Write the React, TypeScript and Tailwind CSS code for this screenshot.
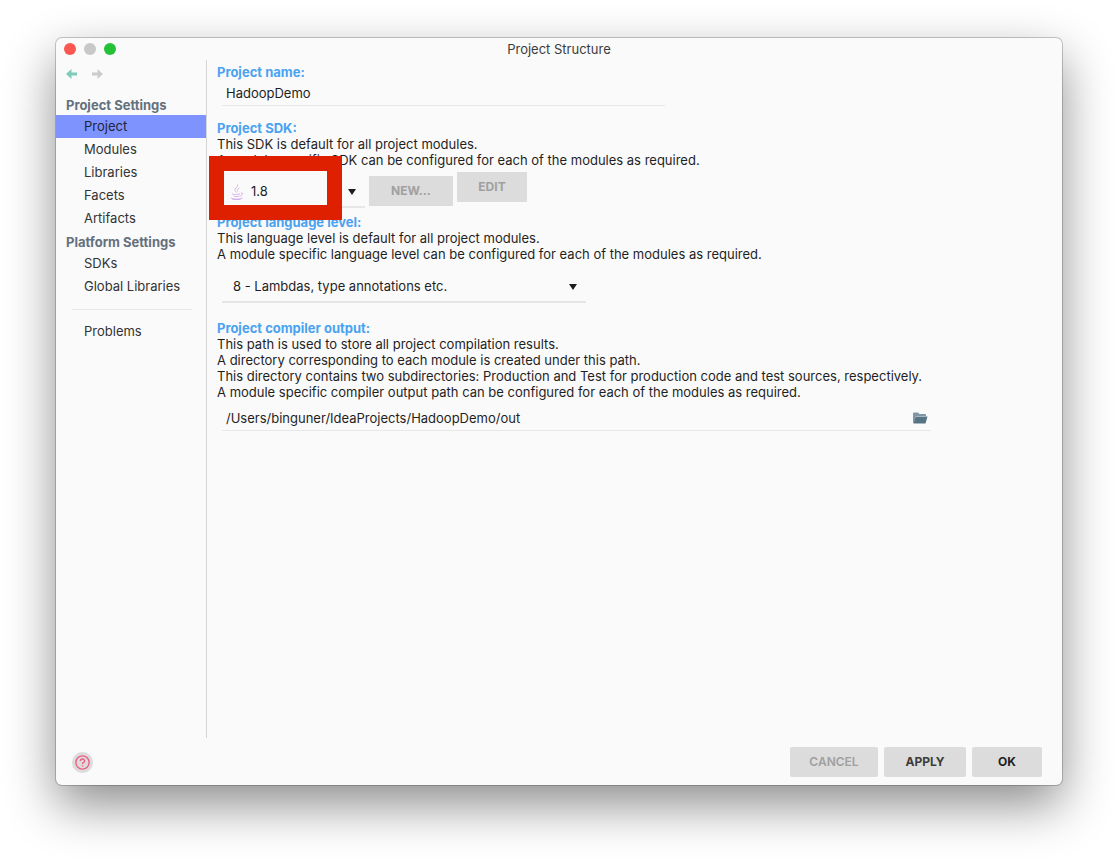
import { useState } from "react";
import type { ReactNode } from "react";

const PROJECT_ITEMS = ["Project", "Modules", "Libraries", "Facets", "Artifacts"];
const PLATFORM_ITEMS = ["SDKs", "Global Libraries"];

const BackArrow = () => (
  <svg width="12" height="10" viewBox="0 0 12 10" fill="currentColor">
    <path d="M0 5 5.5 0v3.4H11v3.2H5.500V10z" />
  </svg>
);

const ForwardArrow = () => (
  <svg width="12" height="10" viewBox="0 0 12 10" fill="currentColor">
    <path d="M11 5 5.500 0v3.400H0v3.200H5.500V10z" />
  </svg>
);

const JavaIcon = () => (
  <svg width="14" height="16" viewBox="0 0 14 16" fill="none" stroke="#d3aae8" strokeWidth="0.900">
    <path d="M7.500 0.500C8.500 3 4 4.500 5 6.500L6.500 8.500" />
    <path d="M9.500 4C7 5.200 7.200 6 8 7.500" />
    <path d="M2.500 9.500C1 10.500 6 11 10 9.800M11 9c2.500-.5 2 2-.8 3" />
    <path d="M3.500 12c1.500.8 4 .8 6 0" />
    <path d="M1 14c2 1.500 9 1.500 11.500 0M2.500 15.500h8" />
  </svg>
);

const FolderIcon = () => (
  <svg width="16" height="12" viewBox="0 0 16 12">
    <path d="M1 11V1.500Q1 .5 2 .5h4l1.500 1.500H13q1 0 1 1V4H4L2 11z" fill="#7f97a5" />
    <path d="M3.800 4.500H15.500L13.500 11.500H1.500z" fill="#567486" />
  </svg>
);

const HelpIcon = () => (
  <svg width="15" height="15" viewBox="0 0 14 14" fill="none" stroke="#ee5f84" strokeWidth="1.300">
    <circle cx="7" cy="7" r="6.200" />
    <path d="M5 5.700C5 3 9 3.100 9 5.500 9 6.900 7 6.900 7 8.500M7 9.500v1.300" />
  </svg>
);

const DropArrow = () => (
  <svg
    className="pointer-events-none absolute right-[9px] top-1/2 -translate-y-1/2"
    width="8"
    height="6"
    viewBox="0 0 8 6"
  >
    <path d="M0 0h8L4 6z" fill="#1c1c1c" />
  </svg>
);

const NavItem = ({
  label,
  active,
  onClick,
}: {
  label: string;
  active: boolean;
  onClick: () => void;
}) => (
  <button
    type="button"
    onClick={onClick}
    className={
      active
        ? "block h-[23px] w-full bg-[#7f93ff] pb-px pl-7 text-left text-[#20243a]"
        : "block h-[23px] w-full pb-px pl-7 text-left text-[#333333]"
    }
  >
    {label}
  </button>
);

const GroupTitle = ({ children }: { children: ReactNode }) => (
  <h2 className="h-[22px] pl-[10px] pt-1 font-bold text-[#64707c]">{children}</h2>
);

const FieldTitle = ({ htmlFor, children }: { htmlFor: string; children: ReactNode }) => (
  <label htmlFor={htmlFor} className="block font-bold text-[#4aa3f0]">
    {children}
  </label>
);

const App = () => {
  const [selected, setSelected] = useState("Project");
  const [name, setName] = useState("HadoopDemo");
  const [output, setOutput] = useState("/Users/binguner/IdeaProjects/HadoopDemo/out");

  return (
    <div className="flex min-h-screen bg-white px-14 pb-[74px] pt-[38px] font-['Inter','Liberation_Sans',sans-serif] text-[13px] leading-4 text-[#1f1f1f]">
      <div className="flex flex-1 flex-col rounded-md bg-[#fafafa] shadow-[0_0_0_1px_rgba(0,0,0,0.2),0_20px_50px_rgba(0,0,0,0.45)]">
        <header className="grid h-[22px] grid-cols-[1fr_auto_1fr] items-center">
          <div className="flex gap-2 pl-2">
            <span className="size-3 rounded-full bg-[#fc5650]" />
            <span className="size-3 rounded-full bg-[#c8c8c8]" />
            <span className="size-3 rounded-full bg-[#24c138]" />
          </div>
          <h1 className="text-[#3c3c3c]">Project Structure</h1>
        </header>

        <div className="flex flex-1">
          <nav className="w-[151px] shrink-0 border-r border-[#d6d6d6]">
            <div className="flex h-[33px] gap-[14px] pl-[10px] pt-[9px]">
              <button type="button" aria-label="Back" className="h-[10px] text-[#80cbb8]">
                <BackArrow />
              </button>
              <button type="button" aria-label="Forward" className="h-[10px] text-[#cccccc]">
                <ForwardArrow />
              </button>
            </div>
            <GroupTitle>Project Settings</GroupTitle>
            {PROJECT_ITEMS.map((item) => (
              <NavItem
                key={item}
                label={item}
                active={item === selected}
                onClick={() => setSelected(item)}
              />
            ))}
            <GroupTitle>Platform Settings</GroupTitle>
            {PLATFORM_ITEMS.map((item) => (
              <NavItem
                key={item}
                label={item}
                active={item === selected}
                onClick={() => setSelected(item)}
              />
            ))}
            <hr className="mb-[10px] ml-4 mr-[14px] mt-[11px] border-[#e8e8e8]" />
            <NavItem
              label="Problems"
              active={selected === "Problems"}
              onClick={() => setSelected("Problems")}
            />
          </nav>

          <main className="flex-1 pl-[10px] pt-1">
            <section>
              <FieldTitle htmlFor="name">Project name:</FieldTitle>
              <input
                id="name"
                value={name}
                onChange={(e) => setName(e.target.value)}
                className="ml-[5px] block h-[26px] w-full max-w-[443px] border-b border-[#e8e8e8] bg-transparent pl-1 outline-none"
              />
            </section>

            <section className="mt-[14px]">
              <FieldTitle htmlFor="sdk">Project SDK:</FieldTitle>
              <p>This SDK is default for all project modules.</p>
              <p>A module specific SDK can be configured for each of the modules as required.</p>
              <div className="relative ml-[5px] flex h-[46px] items-start gap-1 pt-1">
                <div className="relative mt-1 w-[143px]">
                  <select
                    id="sdk"
                    className="h-8 w-full appearance-none border-b-2 border-[#e6e6e6] bg-transparent pl-[29px] outline-none"
                  >
                    <option>1.8</option>
                  </select>
                  <span className="pointer-events-none absolute left-2 top-2">
                    <JavaIcon />
                  </span>
                  <DropArrow />
                </div>
                <button
                  type="button"
                  disabled
                  className="mt-1 h-[30px] w-[84px] bg-[#dcdcdc] text-xs font-bold text-[#a0a0a0]"
                >
                  NEW...
                </button>
                <button
                  type="button"
                  disabled
                  className="h-[30px] w-[70px] bg-[#dcdcdc] text-xs font-bold text-[#a0a0a0]"
                >
                  EDIT
                </button>
                {/* highlight around the chosen SDK */}
                <div className="pointer-events-none absolute -left-[13px] -top-3 h-16 w-[133px] border-[15px] border-[#df2000]" />
              </div>
            </section>

            <section>
              <FieldTitle htmlFor="level">Project language level:</FieldTitle>
              <p>This language level is default for all project modules.</p>
              <p>
                A module specific language level can be configured for each of the modules as
                required.
              </p>
              <div className="relative ml-[5px] mt-[9px] max-w-[364px]">
                <select
                  id="level"
                  className="h-8 w-full appearance-none border-b-2 border-[#e6e6e6] bg-transparent pl-[11px] outline-none"
                >
                  <option>8 - Lambdas, type annotations etc.</option>
                </select>
                <DropArrow />
              </div>
            </section>

            <section className="mt-[17px]">
              <FieldTitle htmlFor="output">Project compiler output:</FieldTitle>
              <p>This path is used to store all project compilation results.</p>
              <p>A directory corresponding to each module is created under this path.</p>
              <p>
                This directory contains two subdirectories: Production and Test for production code
                and test sources, respectively.
              </p>
              <p>
                A module specific compiler output path can be configured for each of the modules as
                required.
              </p>
              <div className="ml-[5px] mt-[6px] flex h-[25px] max-w-[709px] items-center border-b border-[#e8e8e8] pr-[3px]">
                <input
                  id="output"
                  value={output}
                  onChange={(e) => setOutput(e.target.value)}
                  className="min-w-0 flex-1 bg-transparent pl-1 outline-none"
                />
                <button type="button" aria-label="Browse">
                  <FolderIcon />
                </button>
              </div>
            </section>
          </main>
        </div>

        <footer className="flex items-center gap-[6px] pb-2 pl-4 pr-5 pt-[9px]">
          <button
            type="button"
            aria-label="Help"
            className="mr-auto flex size-[21px] items-center justify-center rounded-full bg-[#dcdcdc]"
          >
            <HelpIcon />
          </button>
          <button
            type="button"
            disabled
            className="h-[30px] w-[88px] rounded-xs bg-[#dcdcdc] text-xs font-semibold text-[#a0a0a0]"
          >
            CANCEL
          </button>
          <button
            type="button"
            className="h-[30px] w-[82px] rounded-xs bg-[#dcdcdc] text-xs font-bold text-[#3c3c3c]"
          >
            APPLY
          </button>
          <button
            type="button"
            className="h-[30px] w-[70px] rounded-xs bg-[#dcdcdc] text-xs font-bold text-[#1f1f1f]"
          >
            OK
          </button>
        </footer>
      </div>
    </div>
  );
};

export default App;
